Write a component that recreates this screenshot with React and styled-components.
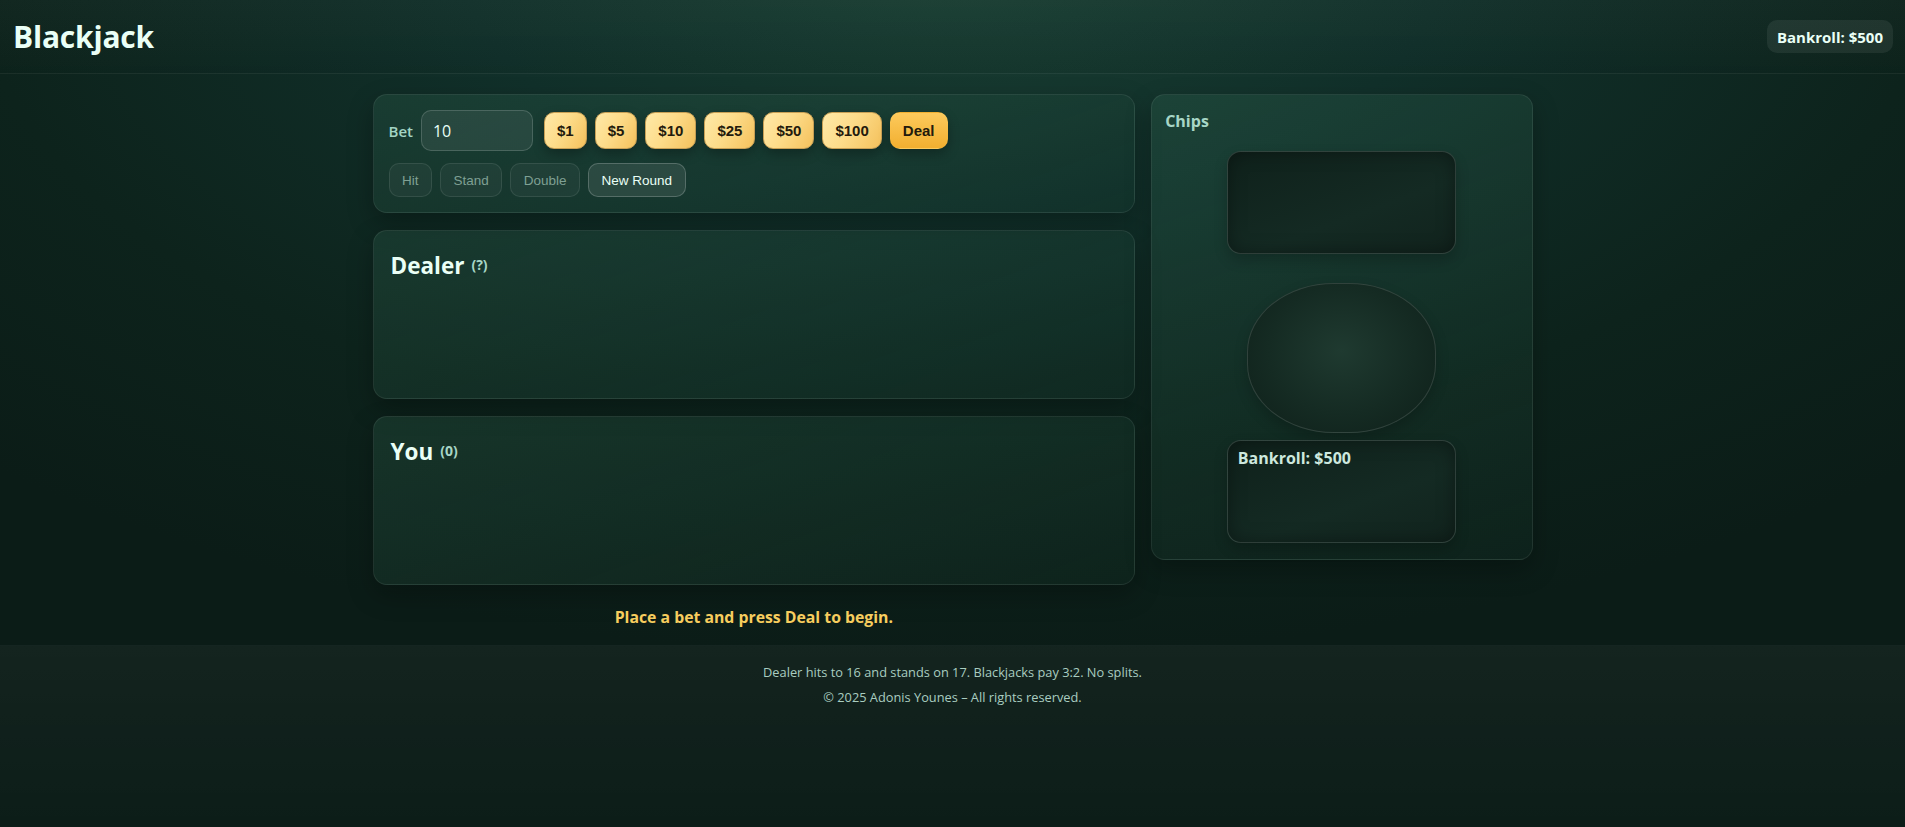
import React from 'react'
import styled, { createGlobalStyle } from 'styled-components'

const GlobalStyle = createGlobalStyle`
  * { box-sizing: border-box; }
  body {
    margin: 0;
    font-family: "Segoe UI", "Open Sans", "Noto Sans", sans-serif;
    color: #e8fff6;
    background: radial-gradient(1400px 700px at 50% -5%, #1a3f33 0%, #11302a 35%, #0d231c 70%, #0b1c17 100%);
    background-color: #0b1c17;
    min-height: 100vh;
  }
`;

const Page = styled.div`
  min-height: 100vh;
  display: flex;
  flex-direction: column;
`;

const Header = styled.header`
  height: 74px;
  padding: 0 12px;
  display: flex;
  align-items: center;
  justify-content: space-between;
  border-bottom: 1px solid rgba(255,255,255,0.04);
  background: linear-gradient(180deg, rgba(255,255,255,0.02), rgba(0,0,0,0.04));

  h1 {
    margin: 0 0 0 1px;
    font-size: 30px;
    font-weight: 700;
    letter-spacing: -0.2px;
    color: #eafff6;
  }
`;

const Pill = styled.div`
  height: 33px;
  padding: 0 10px;
  display: flex;
  align-items: center;
  border-radius: 10px;
  background: rgba(255,255,255,0.07);
  font-size: 15px;
  font-weight: 700;
  color: #eafff6;
`;

const Main = styled.main`
  width: 1160px;
  margin: 0 auto;
  padding: 20px 0 18px;
  display: grid;
  grid-template-columns: 2fr 1fr;
  gap: 16px;
  align-items: start;
`;

const Column = styled.div`
  display: flex;
  flex-direction: column;
  gap: 17px;
`;

const Panel = styled.section`
  border-radius: 14px;
  border: 1px solid rgba(255,255,255,0.08);
  background: linear-gradient(160deg, rgba(60,120,95,0.22), rgba(30,70,55,0.12));
  box-shadow: 0 10px 26px rgba(0,0,0,0.28);
`;

const Controls = styled(Panel)`
  padding: 15px 16px 15px 15px;
  display: flex;
  flex-direction: column;
  gap: 12px;
`;

const Row = styled.div`
  display: flex;
  align-items: center;
  gap: 8px;
`;

const Label = styled.label`
  font-size: 15px;
  font-weight: 600;
  color: #a3d4c4;
`;

const BetInput = styled.input`
  width: 112px;
  height: 41px;
  margin-right: 3px;
  padding: 0 11px;
  border-radius: 10px;
  border: 1px solid rgba(255,255,255,0.16);
  background: rgba(255,255,255,0.07);
  color: #e8fff6;
  font-family: inherit;
  font-size: 16px;
  outline: none;
`;

const Chip = styled.button`
  height: 37px;
  padding: 0 12px;
  border-radius: 10px;
  border: 1px solid ${p => (p.$deal ? 'transparent' : '#c9a055')};
  background: ${p => (p.$deal
    ? 'linear-gradient(180deg, #fdca5c, #f2af30)'
    : 'linear-gradient(120deg, #ffe9a8 0%, #fddc8a 45%, #f4c15c 100%)')};
  color: #231a0c;
  font-family: "Liberation Sans", Arial, sans-serif;
  font-size: 15px;
  font-weight: 700;
  box-shadow: 0 5px 12px rgba(0,0,0,0.28);
`;

const Action = styled.button`
  height: 34px;
  padding: 0 12.5px;
  border-radius: 10px;
  border: 1px solid ${p => (p.$active ? 'rgba(255,255,255,0.2)' : 'rgba(255,255,255,0.09)')};
  background: ${p => (p.$active ? 'rgba(255,255,255,0.09)' : 'rgba(255,255,255,0.04)')};
  color: ${p => (p.$active ? '#eafff6' : '#7fa094')};
  font-family: "Liberation Sans", Arial, sans-serif;
  font-size: 13.5px;
`;

const Hand = styled(Panel)`
  height: 169px;
  padding: 18px 18px 18px 17px;
`;

const HandTitle = styled.h2`
  margin: 0;
  height: 32px;
  display: flex;
  align-items: center;
  gap: 7px;
  font-size: 22.5px;
  font-weight: 700;
  color: #eafff6;

  span {
    font-size: 14px;
    font-weight: 700;
    color: #a7d6c6;
    margin-top: -2px;
  }
`;

const Status = styled.p`
  margin: 5px 0 0;
  line-height: 20px;
  text-align: center;
  font-size: 15.8px;
  font-weight: 700;
  color: #f7cd5e;
`;

const Side = styled(Panel)`
  height: 466px;
  padding: 14px 14px 16px 13px;
  display: flex;
  flex-direction: column;
  align-items: center;
`;

const SideTitle = styled.h3`
  align-self: stretch;
  margin: 0;
  line-height: 24px;
  font-size: 16px;
  font-weight: 700;
  color: #a7d6c6;
`;

const Tray = styled.div`
  width: 229px;
  height: 103px;
  margin-top: ${p => p.$gap}px;
  padding: 6px 10px;
  border-radius: 14px;
  border: 1px solid rgba(255,255,255,0.13);
  background: linear-gradient(160deg, #0f211b, #142a23 60%, #11231d);
  box-shadow: inset 0 0 18px rgba(0,0,0,0.35), 0 6px 14px rgba(0,0,0,0.2);
  font-size: 16px;
  font-weight: 700;
  color: #cde8de;
`;

const Pot = styled.div`
  width: 189px;
  height: 150px;
  margin-top: 29px;
  border-radius: 46%;
  border: 1px solid rgba(255,255,255,0.13);
  background: radial-gradient(ellipse at 50% 45%, #1f3a30 0%, #152b23 55%, #0e1f19 100%);
  box-shadow: 0 6px 14px rgba(0,0,0,0.2);
`;

const Footer = styled.footer`
  flex: 1;
  padding: 16px 16px;
  border-top: 1px solid rgba(255,255,255,0.04);
  background: linear-gradient(180deg, rgba(255,255,255,0.035), rgba(255,255,255,0.005));
  text-align: center;
  font-size: 12.8px;
  color: #a9cdc0;

  p {
    margin: 0 0 5px;
    line-height: 20px;
  }
`;

const chips = [1, 5, 10, 25, 50, 100];

export default function App() {
  return (
    <Page>
      <GlobalStyle />
      <Header>
        <h1>Blackjack</h1>
        <Pill>Bankroll: $500</Pill>
      </Header>

      <Main>
        <Column>
          <Controls>
            <Row>
              <Label>Bet</Label>
              <BetInput defaultValue="10" />
              {chips.map(c => (
                <Chip key={c}>${c}</Chip>
              ))}
              <Chip $deal>Deal</Chip>
            </Row>
            <Row>
              <Action disabled>Hit</Action>
              <Action disabled>Stand</Action>
              <Action disabled>Double</Action>
              <Action $active>New Round</Action>
            </Row>
          </Controls>

          <Hand>
            <HandTitle>Dealer <span>(?)</span></HandTitle>
          </Hand>
          <Hand>
            <HandTitle>You <span>(0)</span></HandTitle>
          </Hand>

          <Status>Place a bet and press Deal to begin.</Status>
        </Column>

        <Side>
          <SideTitle>Chips</SideTitle>
          <Tray $gap={18} />
          <Pot />
          <Tray $gap={7}>Bankroll: $500</Tray>
        </Side>
      </Main>

      <Footer>
        <p>Dealer hits to 16 and stands on 17. Blackjacks pay 3:2. No splits.</p>
        <p>© 2025 Adonis Younes – All rights reserved.</p>
      </Footer>
    </Page>
  )
}
